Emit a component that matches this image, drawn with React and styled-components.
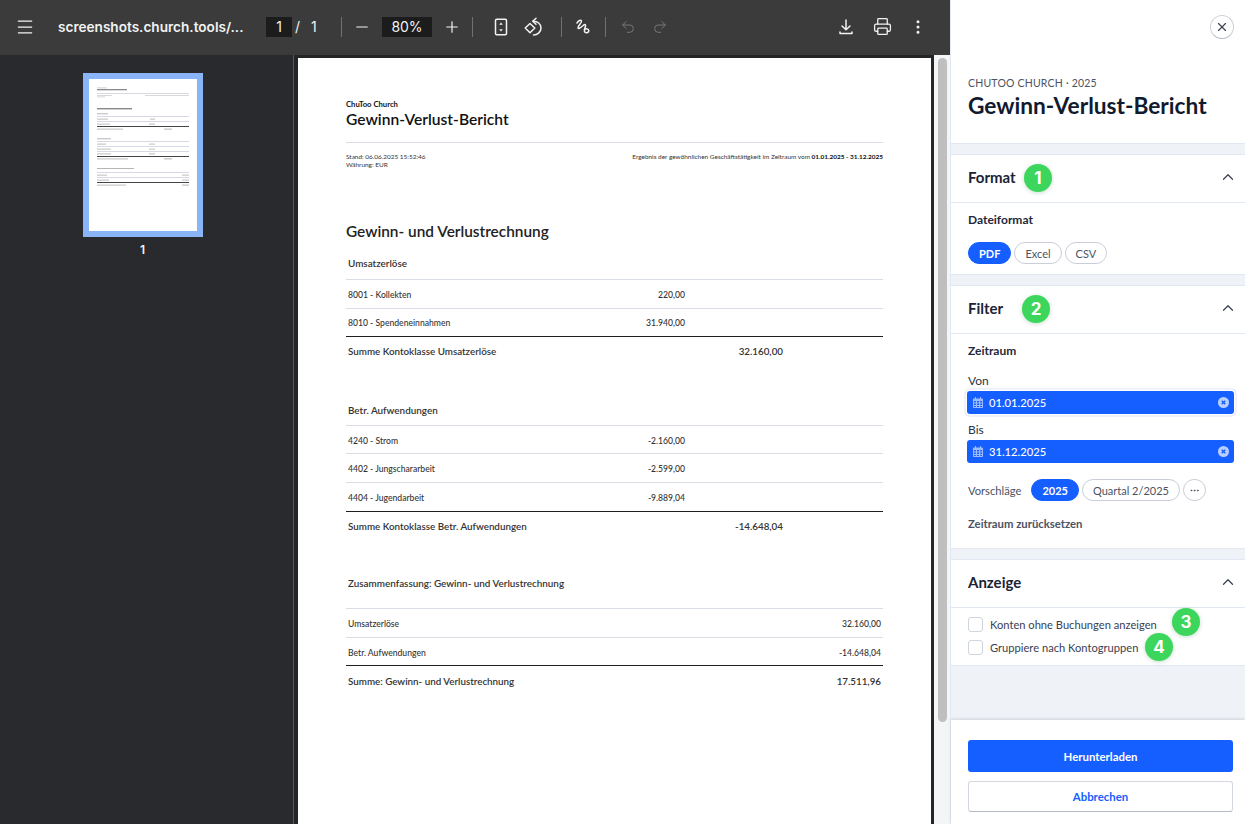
import React from 'react';
import styled, { createGlobalStyle } from 'styled-components';
import { Menu, Minus, Plus, Printer, EllipsisVertical, Undo2, Redo2, X, ChevronUp, Ellipsis } from 'lucide-react';

const GlobalStyle = createGlobalStyle`
    html, body {
        margin: 0;
        padding: 0;
        height: 100%;
        overflow: hidden;
        background: #292a2d;
    }
    * {
        box-sizing: border-box;
    }
`;

const Page = styled.div`
    position: relative;
    display: flex;
    width: 1245px;
    height: 824px;
    overflow: hidden;
    font-family: Lato, "Liberation Sans", sans-serif;
`;

/* pdf viewer */
const Viewer = styled.div`
    display: flex;
    flex-direction: column;
    width: 950px;
    height: 824px;
`;

const Toolbar = styled.div`
    display: flex;
    align-items: center;
    flex: none;
    height: 55px;
    padding: 0 16px 2px 9px;
    background: #3b3b3b;
    color: #f1f3f4;
`;

const ToolButton = styled.div`
    display: flex;
    align-items: center;
    justify-content: center;
    flex: none;
    width: 32px;
    height: 32px;
    margin-left: ${(p) => p.$ml || 0}px;
    color: ${(p) => (p.$disabled ? '#74777a' : '#f1f3f4')};
`;

const FileName = styled.div`
    flex: none;
    width: 182px;
    margin-left: 17px;
    font-family: Inter, "Liberation Sans", sans-serif;
    font-size: 13.6px;
    font-weight: 600;
    white-space: nowrap;
`;

const NumberBox = styled.div`
    display: flex;
    align-items: center;
    justify-content: center;
    flex: none;
    width: ${(p) => p.$w}px;
    height: 20px;
    margin-left: ${(p) => p.$ml || 0}px;
    background: #1c1c1c;
    font-family: Inter, "Liberation Sans", sans-serif;
    font-size: 14px;
`;

const PageText = styled.div`
    flex: none;
    width: 36px;
    padding-left: 3px;
    font-family: Inter, "Liberation Sans", sans-serif;
    font-size: 14px;
    word-spacing: 7px;
`;

const Separator = styled.div`
    flex: none;
    width: 1px;
    height: 20px;
    margin-left: ${(p) => p.$ml || 0}px;
    background: #6f7174;
`;

const ToolSpacer = styled.div`
    flex: 1;
`;

const ViewerBody = styled.div`
    display: flex;
    flex: 1;
    min-height: 0;
    background: #292a2d;
`;

const ThumbColumn = styled.div`
    display: flex;
    flex-direction: column;
    align-items: center;
    flex: none;
    width: 294px;
    padding: 18px 8px 0 0;
    border-right: 1px solid #55575a;
    background: #292a2d;
    color: #f1f3f4;
`;

const Thumb = styled.div`
    display: flex;
    width: 120px;
    height: 164px;
    border: 6px solid #8ab4f8;
    background: #fff;

    svg {
        filter: blur(0.35px);
    }
`;

const ThumbLabel = styled.div`
    margin-top: 5px;
    font-family: Inter, "Liberation Sans", sans-serif;
    font-size: 12px;
    font-weight: 600;
`;

const PdfArea = styled.div`
    display: flex;
    flex: 1;
    min-width: 0;
    padding: 3px 0 0 4px;
    background: #242527;
`;

const PdfPage = styled.div`
    flex: none;
    width: 633px;
    padding: 42px 48px 0;
    background: #fff;
    color: #1a1a1a;
`;

const ScrollTrack = styled.div`
    flex: none;
    width: 16px;
    margin: -3px 0 0 3px;
    padding: 3px 3px 0 4px;
    background: #f4f5f7;
`;

const ScrollThumb = styled.div`
    height: 664px;
    border-radius: 5px;
    background: #bfbfbf;
`;

/* report inside the pdf */
const OrgName = styled.div`
    font-size: 7.7px;
    line-height: 9px;
    font-weight: 700;
    color: #111;
`;

const ReportTitle = styled.div`
    font-size: 15.6px;
    line-height: 20px;
    font-weight: 600;
    color: #111;
`;

const ReportRule = styled.div`
    height: 1px;
    margin-top: 13px;
    background: #d8dde6;
`;

const MetaRow = styled.div`
    display: flex;
    justify-content: space-between;
    margin-top: 10px;
    font-size: 6.45px;
    line-height: 7.5px;
    color: #333;

    b {
        font-weight: 700;
        color: #111;
    }
`;

const SectionHeading = styled.div`
    margin-top: 54px;
    font-size: 15.4px;
    line-height: 18px;
    font-weight: 600;
    color: #222;
`;

const GroupHead = styled.div`
    height: ${(p) => p.$h}px;
    margin-top: ${(p) => p.$mt}px;
    padding: ${(p) => p.$pt}px 2px 0;
    border-bottom: 1px solid #d8dde6;
    font-size: 9.9px;
    line-height: 12px;
    font-weight: 600;
    color: #333;
`;

const ReportRow = styled.div`
    display: grid;
    grid-template-columns: 240px 97px 98px 1fr;
    align-items: center;
    height: 28.6px;
    padding: ${(p) => (p.$bold ? '0 2px' : '2px 2px 0')};
    border-bottom: 1px solid ${(p) => (p.$strong ? '#1f1f1f' : '#d8dde6')};
    font-size: ${(p) => (p.$bold ? 9.8 : 8.6)}px;
    font-weight: ${(p) => (p.$bold ? 600 : 500)};
    color: #333;

    ${(p) => p.$noLine && 'border-bottom: none;'}
`;

const Cell = styled.div`
    grid-row: 1;
    grid-column: ${(p) => p.$col};
    text-align: right;
    white-space: nowrap;
`;

const LabelCell = styled.div`
    grid-row: 1;
    grid-column: 1 / span 2;
    white-space: nowrap;
`;

/* settings sidebar */
const Sidebar = styled.aside`
    display: flex;
    flex-direction: column;
    flex: none;
    width: 295px;
    height: 824px;
    border-left: 1px solid #e1e7f3;
    background: #eff2f7;
    color: #1a2338;
`;

const SideHeader = styled.header`
    flex: none;
    height: 144px;
    padding: 15px 11px 0 17px;
    border-bottom: 1px solid #e1e7f3;
    background: #fff;
`;

const CloseButton = styled.div`
    display: flex;
    align-items: center;
    justify-content: center;
    width: 24px;
    height: 24px;
    margin-left: auto;
    border: 1px solid #ccd1da;
    border-bottom-color: #b4bac6;
    border-radius: 50%;
    color: #3a4152;
`;

const Overline = styled.div`
    margin-top: 37px;
    font-size: 10.5px;
    line-height: 14px;
    letter-spacing: 0.2px;
    color: #4b5363;
`;

const DrawerTitle = styled.h1`
    margin: 2px 0 0;
    font-size: 22.7px;
    line-height: 28px;
    font-weight: 700;
    color: #111a2e;
`;

const Section = styled.section`
    flex: none;
    height: ${(p) => p.$h}px;
    margin-top: ${(p) => p.$mt}px;
    border-top: 1px solid #e1e7f3;
    border-bottom: 1px solid #e1e7f3;
    background: #fff;
`;

const SectionBar = styled.div`
    display: flex;
    align-items: center;
    justify-content: space-between;
    height: 48px;
    padding: 0 8px 4px 17px;
    border-bottom: 1px solid #e1e7f3;
    font-size: 15px;
    font-weight: 700;
    color: #1a2338;
`;

const SectionBody = styled.div`
    padding: ${(p) => p.$pad || '9px 11px 0 17px'};
`;

const FieldTitle = styled.div`
    font-size: 12px;
    line-height: 16px;
    font-weight: 700;
    color: #1f283b;
`;

const PillRow = styled.div`
    display: flex;
    align-items: center;
    gap: 3px;
    margin-top: ${(p) => p.$mt}px;
`;

const Pill = styled.div`
    display: flex;
    align-items: center;
    justify-content: center;
    height: 22px;
    padding: 0 10px;
    border: 1px solid ${(p) => (p.$active ? '#155eff' : '#c9ced8')};
    border-radius: 11px;
    background: ${(p) => (p.$active ? '#155eff' : '#fff')};
    color: ${(p) => (p.$active ? '#fff' : '#4b5363')};
    font-size: 11px;
    font-weight: ${(p) => (p.$active ? 700 : 400)};
`;

const RoundPill = styled(Pill)`
    width: 23px;
    padding: 0;
    color: #4b5363;
`;

const InputLabel = styled.div`
    margin-top: ${(p) => p.$mt}px;
    font-size: 12px;
    line-height: 16px;
    color: #2a3244;
`;

const DateInput = styled.div`
    display: flex;
    align-items: center;
    height: 23px;
    margin: 2px 0 0 -1px;
    padding: 0 5px 0 6px;
    border-radius: 3px;
    background: #155eff;
    color: #fff;
    font-size: 11.2px;
    font-weight: 500;
    box-shadow: ${(p) => (p.$focus ? '0 0 0 1.5px #fff, 0 0 0 2.5px #dfe6f5' : 'none')};

    span {
        flex: 1;
        margin-left: 6px;
    }
`;

const SuggestRow = styled(PillRow)`
    span {
        margin-right: 7px;
        font-size: 11.2px;
        color: #4b5363;
    }
`;

const ResetLink = styled.div`
    margin-top: 15px;
    font-size: 11.3px;
    line-height: 16px;
    font-weight: 700;
    color: #4b5363;
`;

const CheckRow = styled.div`
    display: flex;
    align-items: center;
    gap: 7px;
    height: 23px;
    font-size: 11.15px;
    color: #3a4152;
`;

const CheckBox = styled.div`
    flex: none;
    width: 15px;
    height: 15px;
    border: 1px solid #cfd4dd;
    border-radius: 3px;
    background: #fff;
`;

const SideFooter = styled.footer`
    flex: none;
    display: flex;
    flex-direction: column;
    gap: 9px;
    height: 104px;
    margin-top: auto;
    padding: 20px 12px 0 17px;
    background: #fff;
    box-shadow: 0 -1px 3px rgba(60, 70, 90, 0.18);
`;

const PrimaryButton = styled.div`
    display: flex;
    align-items: center;
    justify-content: center;
    height: 32px;
    border-radius: 3px;
    background: #155eff;
    color: #fff;
    font-size: 11.4px;
    font-weight: 700;
`;

const SecondaryButton = styled.div`
    display: flex;
    align-items: center;
    justify-content: center;
    height: 31px;
    border: 1px solid #d3d7df;
    border-bottom-color: #b4bac6;
    border-radius: 3px;
    background: #fff;
    color: #155eff;
    font-size: 11.4px;
    font-weight: 700;
`;

/* numbered callouts put over the screenshot */
const Badge = styled.div`
    position: absolute;
    left: ${(p) => p.$x - 14}px;
    top: ${(p) => p.$y - 14}px;
    display: flex;
    align-items: center;
    justify-content: center;
    width: 28px;
    height: 28px;
    border-radius: 50%;
    background: #3dd65c;
    box-shadow: 0 1px 4px rgba(40, 120, 60, 0.25);
    color: #fff;
    font-family: Inter, "Liberation Sans", sans-serif;
    font-size: 17px;
    font-weight: 700;
`;

const FitIcon = () => (
    <svg width="20" height="20" viewBox="0 0 20 20" fill="none" stroke="currentColor">
        <rect x="4.5" y="2.3" width="11" height="15.4" rx="1.2" strokeWidth="1.5" />
        <path d="M10 5.6 8.2 7.8h3.6zM10 14.4l-1.8-2.2h3.6z" fill="currentColor" stroke="none" />
    </svg>
);

const RotateIcon = () => (
    <svg width="20" height="20" viewBox="0 0 20 20" fill="none" stroke="currentColor" strokeWidth="1.5" strokeLinejoin="round" strokeLinecap="round">
        <path d="M7 6.5 2.2 11 7 15.7l4.8-4.7z" />
        <path d="M10 4.3c4.5-.3 8 2.7 8 6.7 0 3.7-3.2 6.9-7.5 7" />
        <path d="M13 1.3 9.8 4.3 13 7.2" />
    </svg>
);

const DrawIcon = () => (
    <svg width="20" height="20" viewBox="0 0 20 20" fill="none" stroke="currentColor" strokeWidth="1.5" strokeLinecap="round" strokeLinejoin="round">
        <path d="M4 6C5.5 3.5 8 2.5 8.5 4 9 6 4.5 8.5 5 11c.4 1.5 3.5-1 5.5-2.8 1.5-1.2 2.5-.7 2 1-.7 2.2-2 4.5-.5 6 1.5 1.3 4 .2 3.8-1.7-.2-1.8-2.7-2.2-4.5-.8" />
    </svg>
);

const DownloadIcon = () => (
    <svg width="20" height="20" viewBox="0 0 20 20" fill="none" stroke="currentColor" strokeWidth="1.5" strokeLinecap="round" strokeLinejoin="round">
        <path d="M10 3v9.5M6 9l4 3.7L14 9" />
        <path d="M4 15v1.5h12V15" />
    </svg>
);

// tiny copy of the report page: [x, y, width, height, colour]
const THUMB_BARS = [
    [8, 8.5, 10, 0.8, '#c4c4c4'], [8, 10, 30, 1.3, '#8a8a8a'], [8, 14, 92, 1, '#d5dae2'],
    [8, 16, 15, 0.8, '#cfcfcf'], [8, 17.5, 8, 0.8, '#cfcfcf'], [56, 16, 44, 0.8, '#cfcfcf'],
    [8, 29, 35, 1.4, '#888'], [8, 34.3, 11, 1, '#b5b5b5'], [8, 37, 92, 1, '#d5dae2'],
    [8, 39.6, 11, 1, '#bdbdbd'], [61, 39.6, 5, 1, '#bdbdbd'], [8, 42, 92, 1, '#d5dae2'],
    [8, 44.6, 13, 1, '#bdbdbd'], [60, 44.6, 6, 1, '#bdbdbd'], [8, 47, 92, 1, '#444'],
    [8, 49.6, 26, 1, '#bdbdbd'], [75, 49.6, 8, 1, '#b5b5b5'],
    [8, 59.3, 14, 1, '#b5b5b5'], [8, 62, 92, 1, '#d5dae2'],
    [8, 64.6, 9, 1, '#bdbdbd'], [60, 64.6, 6, 1, '#bdbdbd'], [8, 67, 92, 1, '#d5dae2'],
    [8, 69.6, 14, 1, '#bdbdbd'], [60, 69.6, 6, 1, '#bdbdbd'], [8, 72, 92, 1, '#d5dae2'],
    [8, 74.4, 14, 1, '#bdbdbd'], [60, 74.4, 6, 1, '#bdbdbd'], [8, 77, 92, 1, '#444'],
    [8, 79.4, 31, 1, '#bdbdbd'], [75, 79.4, 8, 1, '#b5b5b5'],
    [8, 89, 37, 1, '#b5b5b5'], [8, 93, 92, 1, '#d5dae2'],
    [8, 95.6, 10, 1, '#bdbdbd'], [93, 95.6, 7, 1, '#bdbdbd'], [8, 98, 92, 1, '#d5dae2'],
    [8, 100.6, 12, 1, '#bdbdbd'], [93, 100.6, 7, 1, '#bdbdbd'], [8, 103, 92, 1, '#444'],
    [8, 105.6, 29, 1, '#bdbdbd'], [93, 105.6, 7, 1, '#b5b5b5'],
];

const ThumbDrawing = () => (
    <svg width="108" height="152" viewBox="0 0 108 152">
        {THUMB_BARS.map(([x, y, w, h, c], i) => (
            <rect key={i} x={x} y={y} width={w} height={h} fill={c} />
        ))}
    </svg>
);

const CalendarIcon = () => (
    <svg width="10" height="11" viewBox="0 0 10 11" fill="#9dbcff">
        <path d="M2 0h1v1.5H7V0h1v1.5h1.2c.4 0 .8.4.8.8v7.900c0 .4-.4.8-.8.8H.8c-.4 0-.8-.4-.8-.8V2.300c0-.4.4-.8.8-.8H2zM1 4v1.500h1.800V4zm3 0v1.500h2V4zm3.200 0v1.500H9V4zM1 6.500V8h1.800V6.500zm3 0V8h2V6.500zm3.200 0V8H9V6.500zM1 9v1h1.800V9zm3 0v1h2V9zm3.200 0v1H9V9z" />
    </svg>
);

const ClearIcon = () => (
    <svg width="11" height="11" viewBox="0 0 11 11">
        <circle cx="5.5" cy="5.5" r="5.5" fill="#b9cfff" />
        <path d="M3.7 3.7l3.6 3.6M7.3 3.7 3.7 7.3" stroke="#155eff" strokeWidth="1.4" />
    </svg>
);

const SectionChevron = () => <ChevronUp size={18} strokeWidth={1.6} color="#3a4152" />;

const SummaryRows = () => (
    <>
        <ReportRow><LabelCell>Umsatzerlöse</LabelCell><Cell $col={4}>32.160,00</Cell></ReportRow>
        <ReportRow $strong><LabelCell>Betr. Aufwendungen</LabelCell><Cell $col={4}>-14.648,04</Cell></ReportRow>
        <ReportRow $bold $noLine><LabelCell>Summe: Gewinn- und Verlustrechnung</LabelCell><Cell $col={4}>17.511,96</Cell></ReportRow>
    </>
);

const App = () => {
    return (
        <Page>
            <GlobalStyle />
            <Viewer>
                <Toolbar>
                    <ToolButton><Menu size={20} strokeWidth={1.5} /></ToolButton>
                    <FileName>screenshots.church.tools/...</FileName>
                    <NumberBox $w={26} $ml={26}>1</NumberBox>
                    <PageText>/ 1</PageText>
                    <Separator $ml={13} />
                    <ToolButton $ml={4}><Minus size={18} strokeWidth={1.6} /></ToolButton>
                    <NumberBox $w={50} $ml={4}>80%</NumberBox>
                    <ToolButton $ml={4}><Plus size={18} strokeWidth={1.6} /></ToolButton>
                    <Separator $ml={4} />
                    <ToolButton $ml={12}><FitIcon /></ToolButton>
                    <ToolButton><RotateIcon /></ToolButton>
                    <Separator $ml={12} />
                    <ToolButton $ml={5}><DrawIcon /></ToolButton>
                    <Separator $ml={6} />
                    <ToolButton $ml={6} $disabled><Undo2 size={16} strokeWidth={1.5} /></ToolButton>
                    <ToolButton $disabled><Redo2 size={16} strokeWidth={1.5} /></ToolButton>
                    <ToolSpacer />
                    <ToolButton><DownloadIcon /></ToolButton>
                    <ToolButton $ml={4}><Printer size={19} strokeWidth={1.6} /></ToolButton>
                    <ToolButton $ml={4}><EllipsisVertical size={18} strokeWidth={2} /></ToolButton>
                </Toolbar>
                <ViewerBody>
                    <ThumbColumn>
                        <Thumb><ThumbDrawing /></Thumb>
                        <ThumbLabel>1</ThumbLabel>
                    </ThumbColumn>
                    <PdfArea>
                        <PdfPage>
                            <OrgName>ChuToo Church</OrgName>
                            <ReportTitle>Gewinn-Verlust-Bericht</ReportTitle>
                            <ReportRule />
                            <MetaRow>
                                <div>Stand: 06.06.2025 15:52:46<br />Währung: EUR</div>
                                <div>Ergebnis der gewöhnlichen Geschäftstätigkeit im Zeitraum vom <b>01.01.2025 - 31.12.2025</b></div>
                            </MetaRow>
                            <SectionHeading>Gewinn- und Verlustrechnung</SectionHeading>

                            <GroupHead $mt={9} $h={31} $pt={8}>Umsatzerlöse</GroupHead>
                            <ReportRow><LabelCell>8001 - Kollekten</LabelCell><Cell $col={2}>220,00</Cell></ReportRow>
                            <ReportRow $strong><LabelCell>8010 - Spendeneinnahmen</LabelCell><Cell $col={2}>31.940,00</Cell></ReportRow>
                            <ReportRow $bold $noLine><LabelCell>Summe Kontoklasse Umsatzerlöse</LabelCell><Cell $col={3}>32.160,00</Cell></ReportRow>

                            <GroupHead $mt={31} $h={29} $pt={7}>Betr. Aufwendungen</GroupHead>
                            <ReportRow><LabelCell>4240 - Strom</LabelCell><Cell $col={2}>-2.160,00</Cell></ReportRow>
                            <ReportRow><LabelCell>4402 - Jungschararbeit</LabelCell><Cell $col={2}>-2.599,00</Cell></ReportRow>
                            <ReportRow $strong><LabelCell>4404 - Jugendarbeit</LabelCell><Cell $col={2}>-9.889,04</Cell></ReportRow>
                            <ReportRow $bold $noLine><LabelCell>Summe Kontoklasse Betr. Aufwendungen</LabelCell><Cell $col={3}>-14.648,04</Cell></ReportRow>

                            <GroupHead $mt={29} $h={40} $pt={8}>Zusammenfassung: Gewinn- und Verlustrechnung</GroupHead>
                            <SummaryRows />
                        </PdfPage>
                        <ScrollTrack><ScrollThumb /></ScrollTrack>
                    </PdfArea>
                </ViewerBody>
            </Viewer>

            <Sidebar>
                <SideHeader>
                    <CloseButton><X size={14} strokeWidth={2} /></CloseButton>
                    <Overline>CHUTOO CHURCH · 2025</Overline>
                    <DrawerTitle>Gewinn-Verlust-Bericht</DrawerTitle>
                </SideHeader>

                <Section $mt={10} $h={121}>
                    <SectionBar>Format<SectionChevron /></SectionBar>
                    <SectionBody>
                        <FieldTitle>Dateiformat</FieldTitle>
                        <PillRow $mt={14}>
                            <Pill $active>PDF</Pill>
                            <Pill>Excel</Pill>
                            <Pill>CSV</Pill>
                        </PillRow>
                    </SectionBody>
                </Section>

                <Section $mt={10} $h={264}>
                    <SectionBar>Filter<SectionChevron /></SectionBar>
                    <SectionBody>
                        <FieldTitle>Zeitraum</FieldTitle>
                        <InputLabel $mt={14}>Von</InputLabel>
                        <DateInput $focus><CalendarIcon /><span>01.01.2025</span><ClearIcon /></DateInput>
                        <InputLabel $mt={8}>Bis</InputLabel>
                        <DateInput><CalendarIcon /><span>31.12.2025</span><ClearIcon /></DateInput>
                        <SuggestRow $mt={16}>
                            <span>Vorschläge</span>
                            <Pill $active>2025</Pill>
                            <Pill>Quartal 2/2025</Pill>
                            <RoundPill><Ellipsis size={11} strokeWidth={2} /></RoundPill>
                        </SuggestRow>
                        <ResetLink>Zeitraum zurücksetzen</ResetLink>
                    </SectionBody>
                </Section>

                <Section $mt={10} $h={107}>
                    <SectionBar>Anzeige<SectionChevron /></SectionBar>
                    <SectionBody $pad="5px 11px 0 17px">
                        <CheckRow><CheckBox />Konten ohne Buchungen anzeigen</CheckRow>
                        <CheckRow><CheckBox />Gruppiere nach Kontogruppen</CheckRow>
                    </SectionBody>
                </Section>

                <SideFooter>
                    <PrimaryButton>Herunterladen</PrimaryButton>
                    <SecondaryButton>Abbrechen</SecondaryButton>
                </SideFooter>
            </Sidebar>

            <Badge $x={1038} $y={178}>1</Badge>
            <Badge $x={1036} $y={309}>2</Badge>
            <Badge $x={1186} $y={622}>3</Badge>
            <Badge $x={1159} $y={647}>4</Badge>
        </Page>
    );
};

export default App;
